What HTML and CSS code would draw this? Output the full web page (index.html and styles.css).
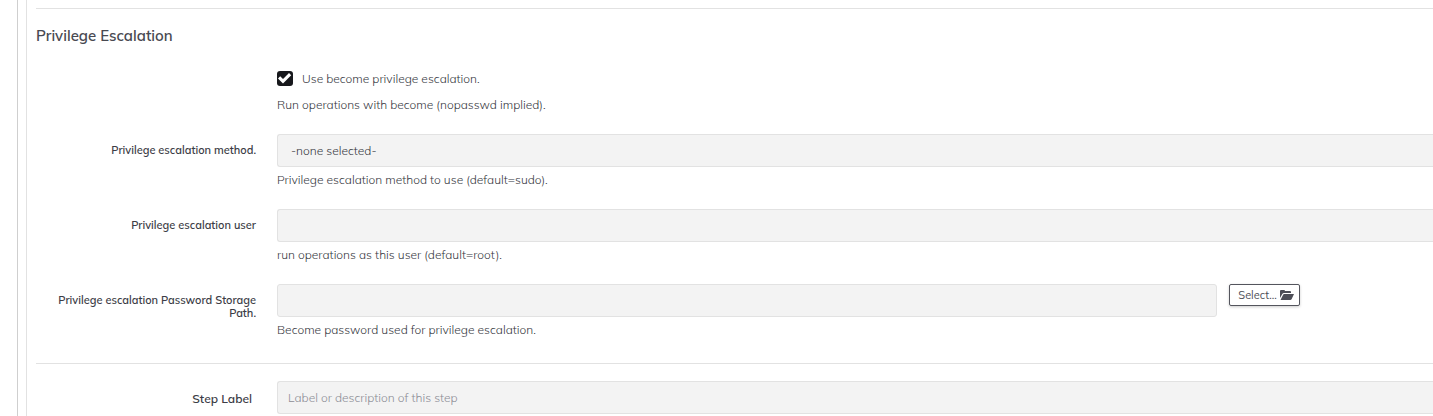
FILE: index.html
```
<!DOCTYPE html>
<html lang="en">
<head>
<meta charset="utf-8">
<title>Edit Step</title>
<link rel="stylesheet" href="styles.css">
</head>
<body>
<main class="panel">
  <form class="step">
    <section class="group">
      <h2 class="heading">Privilege Escalation</h2>
      <div class="row row-check">
        <div class="field">
          <div class="check">
            <span class="tick">
              <input class="tick-box" type="checkbox" id="become" checked>
              <svg class="tick-mark" viewBox="0 0 16 16" aria-hidden="true"><path d="M1 7.500 3.200 5.300 6 8 12 2 14.200 4.200 6 12.400z" fill="#fff"/></svg>
            </span>
            <label for="become">Use become privilege escalation.</label>
          </div>
          <p class="help help-check">Run operations with become (nopasswd implied).</p>
        </div>
      </div>
      <div class="row">
        <label class="label" for="method">Privilege escalation method.</label>
        <div class="field">
          <select class="control select" id="method"><option>-none selected-</option><option>sudo</option><option>su</option></select>
          <p class="help">Privilege escalation method to use (default=sudo).</p>
        </div>
      </div>
      <div class="row">
        <label class="label" for="user">Privilege escalation user</label>
        <div class="field">
          <input class="control" type="text" id="user">
          <p class="help">run operations as this user (default=root).</p>
        </div>
      </div>
      <div class="row">
        <label class="label" for="path">Privilege escalation Password Storage Path.</label>
        <div class="field">
          <div class="picker">
            <input class="control control-end" type="text" id="path">
            <button class="button" type="button">Select...
              <svg class="folder" viewBox="0 0 14 10" aria-hidden="true"><path d="M0 8V1Q0 0 1 0H4Q5 0 5 1H10Q11 1 11 2V3H4Q3 3 2.300 4z M0.500 10 3 5Q3.300 4 4.300 4H14L11.700 9Q11.200 10 10.200 10z" fill="currentColor"/></svg>
            </button>
          </div>
          <p class="help">Become password used for privilege escalation.</p>
        </div>
      </div>
    </section>
    <section class="group group-label">
      <div class="row">
        <label class="label label-step" for="step">Step Label</label>
        <div class="field"><input class="control" type="text" id="step" placeholder="Label or description of this step"></div>
      </div>
    </section>
  </form>
</main>
</body>
</html>
```
FILE: styles.css
```
* { box-sizing: border-box; }
body {
  margin: 0;
  padding-left: 17px;
  background: #fff;
  color: #363841;
  font: 300 12px/18px Muli, Mulish, Lato, sans-serif;
}
.panel { border-left: 1px solid #cfcfcf; padding-left: 8px; }
.step { border-left: 1px solid #e2e2e2; padding: 8px 0 2px 9px; }
.group { border-top: 1px solid #e2e2e2; }
.heading { margin: 0; padding: 17px 0 24px; font-size: 15px; line-height: 20px; font-weight: 600; color: #484951; }
.row { display: grid; grid-template-columns: 220px 1fr; column-gap: 21px; margin-bottom: 20px; }
.row-check .field { grid-column: 2; }
.label { padding: 10px 0 0 20px; text-align: right; font-size: 11px; line-height: 13px; font-weight: 600; color: #3c3d46; }
.label-step { padding: 11px 4px 0 0; font-size: 12px; }
.check { display: flex; align-items: center; gap: 9px; }
.tick { display: grid; width: 16px; height: 16px; }
.tick-box { appearance: none; grid-area: 1 / 1; width: 16px; height: 15px; margin: 0; border-radius: 3px; background: #17181c; }
.tick-mark { grid-area: 1 / 1; width: 16px; height: 16px; pointer-events: none; }
.help { margin: 4px 0 0; }
.help-check { margin-top: 8px; }
.control {
  display: block;
  appearance: none;
  width: 100%;
  height: 33px;
  margin: 0;
  padding: 0 10px;
  border: 1px solid #e2e2e2;
  border-right: 0;
  border-radius: 3px 0 0 3px;
  background: #f3f3f3;
  color: inherit;
  font: inherit;
}
.control::placeholder { color: #8c8d95; opacity: 1; }
.select { padding: 0 13px; }
.picker { display: flex; align-items: flex-start; gap: 12px; padding-right: 133px; }
.control-end { flex: 1; border-right: 1px solid #e2e2e2; border-radius: 3px; }
.button {
  display: flex;
  align-items: center;
  justify-content: center;
  gap: 3px;
  width: 71px;
  height: 22px;
  padding: 0 0 1px 3px;
  border: 1px solid #54555d;
  border-radius: 2px;
  background: #fff;
  box-shadow: 0 1px 3px #0003;
  color: #4d4e57;
  font: 400 11px/18px Muli, Mulish, Lato, sans-serif;
}
.folder { width: 14px; height: 10px; }
.group-label { margin-top: 24px; padding-top: 17px; }
.group-label .row { margin-bottom: 0; }
```
